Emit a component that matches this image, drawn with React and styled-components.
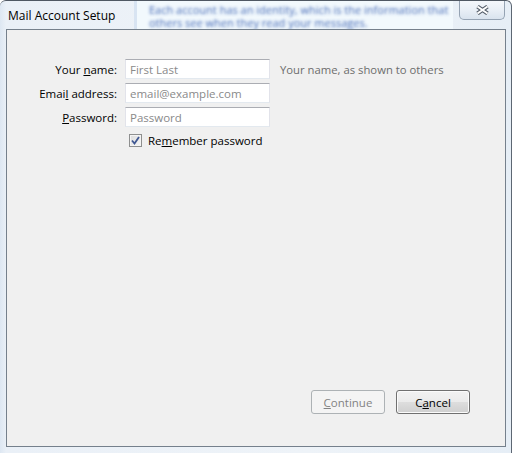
import styled, { createGlobalStyle } from "styled-components";

const Global = createGlobalStyle`
  html, body {
    margin: 0;
    padding: 0;
  }
  body {
    width: 512px;
    height: 453px;
    overflow: hidden;
    font-family: "Open Sans", "Noto Sans", sans-serif;
    font-size: 11.5px;
  }
`;

const Window = styled.div`
  width: 512px;
  height: 453px;
  box-sizing: border-box;
  display: flex;
  flex-direction: column;
  padding: 0 5px 6px 6px;
  border-top: 1px solid #4f5863;
  border-right: 1px solid #5d6773;
  border-radius: 6px 6px 0 0;
  background: linear-gradient(90deg, #dde7f2 0px, #eaf0f7 6px, #eef3f8 60%, #e6eef6 100%);
`;

const TitleBar = styled.div`
  height: 28px;
  display: flex;
  align-items: flex-start;
  overflow: hidden;
`;

const Title = styled.div`
  padding: 6px 0 0 2px;
  width: 126px;
  flex: none;
  color: #000;
  font-size: 12px;
  white-space: nowrap;
`;

const Backdrop = styled.div`
  flex: 1;
  height: 28px;
  overflow: hidden;
  background: #f2f9fd;
  border-left: 3px solid #d8e4f2;
  padding: 2px 0 0 12px;
  box-sizing: border-box;
`;

const Blurred = styled.div`
  color: transparent;
  text-shadow: 0 0 3px rgba(52, 92, 176, 0.9);
  font-size: 11px;
  line-height: 14px;
  height: 13px;
  overflow: visible;
  white-space: nowrap;
  & + & {
    margin-top: 0;
  }
`;

const CloseButton = styled.div`
  flex: none;
  width: 46px;
  height: 19px;
  margin: 0 1px 0 6px;
  box-sizing: border-box;
  border: 1px solid #95a3b3;
  border-top: none;
  border-radius: 0 0 5px 5px;
  background: linear-gradient(180deg, #f4f7fb 0%, #e9eff6 50%, #d9e3ee 100%);
  display: flex;
  align-items: center;
  justify-content: center;
`;

const Client = styled.div`
  flex: 1;
  display: flex;
  flex-direction: column;
  background: #f0f0f0;
  border: 1px solid #75808c;
  padding: 29px 0 0 0;
`;

const Form = styled.div`
  display: grid;
  grid-template-columns: 110px 145px 1fr;
  column-gap: 8px;
  row-gap: 4px;
  align-items: center;
`;

const Label = styled.label`
  text-align: right;
  color: #000;
  white-space: nowrap;
`;

const Key = styled.span`
  text-decoration: underline;
`;

const Input = styled.input`
  height: 20px;
  box-sizing: border-box;
  margin: 0;
  padding: 0 4px;
  border: 1px solid;
  border-color: #abadb3 #e2e3ea #e3e9ef #e2e3ea;
  background: #fff;
  font-family: inherit;
  font-size: 11.5px;
  outline: none;
  &::placeholder {
    color: #8a8a8a;
  }
`;

const Hint = styled.span`
  color: #6d6d6d;
  padding-left: 2px;
  font-size: 11.3px;
  white-space: nowrap;
`;

const CheckRow = styled.label`
  grid-column: 2 / 4;
  display: flex;
  align-items: center;
  gap: 6px;
  margin: 2px 0 0 4px;
  color: #000;
`;

const CheckBox = styled.span`
  width: 13px;
  height: 13px;
  box-sizing: border-box;
  border: 1px solid #8e8f8f;
  background: linear-gradient(135deg, #dcdcdc 0%, #f6f6f6 100%);
  box-shadow: inset 0 0 0 1px #f4f4f4;
  display: flex;
  align-items: center;
  justify-content: center;
`;

const Buttons = styled.div`
  margin-top: auto;
  display: flex;
  justify-content: flex-end;
  gap: 11px;
  padding: 0 35px 32px 0;
`;

const Button = styled.button`
  width: 74px;
  height: 24px;
  box-sizing: border-box;
  margin: 0;
  padding: 0;
  border-radius: 3px;
  font-family: inherit;
  font-size: 11.5px;
  border: 1px solid ${(p) => (p.disabled ? "#adb2b5" : "#707070")};
  color: ${(p) => (p.disabled ? "#838383" : "#000")};
  background: ${(p) =>
    p.disabled
      ? "#f4f4f4"
      : "linear-gradient(180deg, #f2f2f2 0%, #ebebeb 48%, #dddddd 52%, #cfcfcf 100%)"};
  box-shadow: ${(p) => (p.disabled ? "none" : "inset 0 0 0 1px #fbfbfb")};
`;

export default function App() {
  return (
    <Window>
      <Global />
      <TitleBar>
        <Title>Mail Account Setup</Title>
        <Backdrop>
          <Blurred>Each account has an identity, which is the information that</Blurred>
          <Blurred>others see when they read your messages.</Blurred>
        </Backdrop>
        <CloseButton>
          <svg width="15" height="10" viewBox="0 0 15 10">
            <path d="M2.5 1.5 L12.5 8.5 M12.5 1.5 L2.5 8.5" stroke="#555e6a" strokeWidth="4" />
            <path d="M2.5 1.5 L12.5 8.5 M12.5 1.5 L2.5 8.5" stroke="#fff" strokeWidth="2" />
          </svg>
        </CloseButton>
      </TitleBar>
      <Client>
        <Form>
          <Label>
            Your <Key>n</Key>ame:
          </Label>
          <Input placeholder="First Last" />
          <Hint>Your name, as shown to others</Hint>

          <Label>
            Emai<Key>l</Key> address:
          </Label>
          <Input placeholder="email@example.com" />
          <span />

          <Label>
            <Key>P</Key>assword:
          </Label>
          <Input placeholder="Password" type="password" />
          <span />

          <span />
          <CheckRow>
            <CheckBox>
              <svg width="9" height="9" viewBox="0 0 9 9">
                <path d="M1 4.5 L3.5 7.5 L8 1" fill="none" stroke="#3f5792" strokeWidth="1.8" />
              </svg>
            </CheckBox>
            <span>
              Re<Key>m</Key>ember password
            </span>
          </CheckRow>
        </Form>
        <Buttons>
          <Button disabled>
            <Key>C</Key>ontinue
          </Button>
          <Button>
            C<Key>a</Key>ncel
          </Button>
        </Buttons>
      </Client>
    </Window>
  );
}
